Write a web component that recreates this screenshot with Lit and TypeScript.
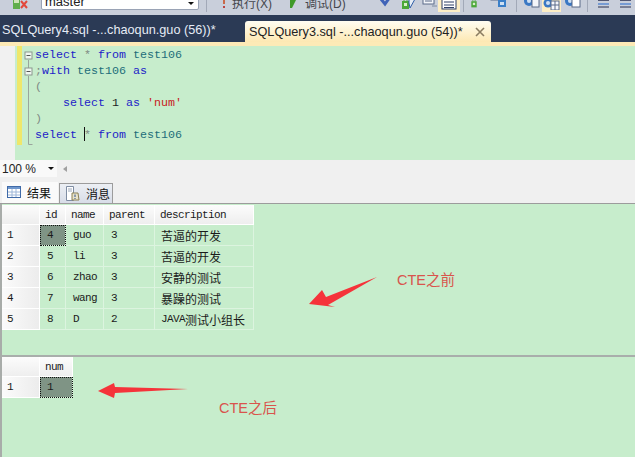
import { LitElement, html, css, svg } from "lit";
import { customElement } from "lit/decorators.js";

const K = (s: string) => html`<span class="kw">${s}</span>`;
const T = (s: string) => html`<span class="tb">${s}</span>`;
const G = (s: string) => html`<span class="gr">${s}</span>`;

const dbIcon = svg`<rect x="1" y="2" width="7" height="12" fill="#5fae4a"/><rect x="2" y="3" width="5" height="5" fill="#cfe6b8"/><path d="M9 6l6 7M15 6l-6 7" stroke="#e2483c" stroke-width="2"/>`;
const greenBox = svg`<rect x="3" y="6" width="7" height="8" fill="#4aa838"/><rect x="5" y="8" width="3" height="3" fill="#d8efc8"/><path d="M5 6V3h3v3" fill="none" stroke="#4aa838"/>`;

@customElement("app-root")
export class AppRoot extends LitElement {
  static styles = css`
    :host { display: block; width: 635px; height: 457px; overflow: hidden; position: relative; background: #c7edcc; font-family: "Liberation Sans", "Noto Sans CJK SC", sans-serif; }
    .page { display: flex; flex-direction: column; height: 457px; }

    .toolbar { height: 15px; flex: none; overflow: hidden; display: flex; align-items: flex-end; background: #c9cfdb; padding-bottom: 3px; box-sizing: border-box; color: #44464c; font-size: 12px; }
    .toolbar svg { flex: none; display: block; }
    .toolbar > svg { margin-bottom: 3px; }
    .spacer { flex: none; }
    .combo { width: 158px; height: 22px; margin-left: 11px; margin-bottom: 2px; box-sizing: border-box; background: #fff; border: 1px solid #9aa3b5; border-radius: 2px; display: flex; align-items: flex-end; justify-content: space-between; padding: 0 4px 0 3px; color: #222; line-height: 15px; font-size: 13px; flex: none; }
    .caret { width: 0; height: 0; border-left: 3px solid transparent; border-right: 3px solid transparent; border-top: 3px solid #111; margin-bottom: 4px; }
    .sep { width: 1px; height: 13px; background: #a2a9b8; flex: none; }
    .hl { background: #fdeec4; height: 13px; padding: 0 3px 2px; box-sizing: border-box; display: flex; align-items: flex-end; flex: none; overflow: hidden; }
    .tb-text { flex: none; line-height: 16px; white-space: nowrap; font-size: 12px; }

    .tabstrip { height: 27px; flex: none; background: #2b3a55; display: flex; align-items: flex-end; font-size: 12.7px; white-space: nowrap; }
    .tab-off { width: 245px; padding: 0 0 3px 2px; box-sizing: border-box; color: #e6ecf6; line-height: 18px; }
    .tab-on { width: 246px; height: 21px; box-sizing: border-box; padding-left: 4px; border-radius: 3px 3px 0 0; background: linear-gradient(#fffdf2, #fde8b2); color: #222; display: flex; align-items: center; justify-content: space-between; padding-right: 6px; }
    .strip { height: 4px; flex: none; background: #fdeab6; }

    .editor { height: 114px; flex: none; display: flex; background: #c7edcc; }
    .gutter { width: 15px; flex: none; background: #f1f1f1; }
    .mark { width: 2px; flex: none; }
    .yellow { width: 5px; height: 99px; flex: none; background: #efe76a; }
    .outline { width: 13px; flex: none; }
    .outline svg { display: block; }
    .code { font-family: "Liberation Mono", monospace; font-size: 11.67px; line-height: 16px; padding-top: 1px; white-space: pre; color: #222; }
    .kw { color: #1c22c8; }
    .tb { color: #1e6d7a; }
    .gr { color: #7f8a84; }
    .st { color: #c8201c; }
    .cursor { display: inline-block; width: 1px; height: 14px; background: #111; vertical-align: -3px; margin-right: -1px; }

    .status { height: 17px; flex: none; background: #f0f0f0; display: flex; align-items: center; font-size: 12px; color: #222; }
    .zoom { width: 57px; height: 17px; box-sizing: border-box; background: #f9f9f9; padding-left: 2px; display: flex; align-items: center; justify-content: space-between; padding-right: 3px; }
    .zoom .caret { margin: 0; }
    .left-tri { margin-left: 6px; width: 0; height: 0; border-top: 3px solid transparent; border-bottom: 3px solid transparent; border-right: 4px solid #a0a0a0; }

    .rtabs { height: 26px; flex: none; background: #f0f0f0; display: flex; align-items: flex-end; padding-left: 2px; gap: 1px; border-bottom: 1px solid #9c9c9c; box-sizing: content-box; font-size: 12px; color: #111; }
    .rtab { display: flex; align-items: center; gap: 6px; box-sizing: border-box; padding-bottom: 1px; }
    .rtab.on { width: 56px; height: 21px; padding-left: 5px; background: #fafafa; }
    .rtab.off { width: 54px; height: 20px; padding-left: 5px; background: linear-gradient(#eceff4, #d8dde8); border: 1px solid #9c9c9c; border-bottom: 0; }

    .pane { background: #c7edcc; border-left: 2px solid #a8aca9; box-sizing: border-box; flex: none; }
    .p1 { height: 153px; padding-top: 1px; border-bottom: 2px solid #a9aeab; }
    .p2 { flex: 1; }
    .grid { display: grid; width: max-content; font-family: "Liberation Mono", "Noto Sans CJK SC", monospace; font-size: 11px; letter-spacing: -0.6px; color: #1b1b1b; }
    .cell { box-sizing: border-box; padding-left: 7px; display: flex; align-items: center; white-space: pre; border-right: 1px solid #dcf4df; border-bottom: 1px solid #dcf4df; }
    .hd { height: 20px; padding-left: 5px; background: linear-gradient(#fcfcfc, #eeeeee); border-color: #fff; }
    .rh { background: linear-gradient(90deg, #fbfbfb, #ececec); border-color: #fff; padding-left: 5px; }
    .d { height: 21px; }
    .cjk { padding-left: 6px; }
    .cjk span { font-family: "Noto Sans CJK SC", sans-serif; font-size: 12px; letter-spacing: 0; }
    .sel { background: #7f9485; outline: 1px dotted #111; outline-offset: -1px; }

    .overlay { position: absolute; inset: 0; pointer-events: none; }
    .overlay svg { position: absolute; left: 0; top: 0; }
    .label { position: absolute; color: #d9544c; font-size: 14.5px; line-height: 18px; white-space: nowrap; }
    .l1 { left: 397px; top: 271px; }
    .l2 { left: 219px; top: 399px; }
  `;

  private rows = [
    ["4", "guo", "3", "苦逼的开发"],
    ["5", "li", "3", "苦逼的开发"],
    ["6", "zhao", "3", "安静的测试"],
    ["7", "wang", "3", "暴躁的测试"],
    ["8", "D", "2", "JAVA|测试小组长"],
  ];

  private gap(w: number) {
    return html`<div class="spacer" style="width:${w}px"></div>`;
  }

  private toolbar() {
    return html`<div class="toolbar">
      ${this.gap(12)}
      <svg width="18" height="14" viewBox="0 0 18 14">${dbIcon}</svg>
      <div class="combo"><span>master</span><span class="caret"></span></div>
      ${this.gap(7)}<div class="sep"></div>
      ${this.gap(13)}
      <svg width="8" height="13" viewBox="0 0 8 13"><path d="M4 1v7" stroke="#c86a4a" stroke-width="2"/><path d="M4 10v2" stroke="#b44" stroke-width="2"/></svg>
      ${this.gap(4)}
      <span class="tb-text">执行(X)</span>
      ${this.gap(18)}
      <svg width="8" height="13" viewBox="0 0 8 13"><path d="M0 2l8 -3v1l-6 12h-2z" fill="#3f9a2a"/></svg>
      ${this.gap(7)}
      <span class="tb-text">调试(D)</span>
      ${this.gap(14)}
      <svg width="8" height="13" viewBox="0 0 8 13"><rect y="0" width="8" height="3" fill="#9ea3ad"/></svg>
      ${this.gap(12)}
      <svg width="11" height="13" viewBox="0 0 11 13"><path d="M1 3l4 5 5-7" fill="none" stroke="#3f63b8" stroke-width="3"/></svg>
      ${this.gap(8)}
      <svg width="17" height="14" viewBox="0 0 17 14">${greenBox}<path d="M11 13l5-9V0h-6v8z" fill="#e6edf5" stroke="#2f5ea8"/></svg>
      ${this.gap(4)}
      <svg width="17" height="14" viewBox="0 0 17 14"><rect x="3" y="0" width="11" height="9" fill="#f3f5f9" stroke="#5a6a88"/><path d="M5 3h7M5 6h7" stroke="#5a6a88"/><path d="M12 11h5" stroke="#7d8aa0"/></svg>
      ${this.gap(1)}
      <div class="hl">
        <svg width="16" height="11" viewBox="0 0 16 11"><rect x="1" y="0" width="14" height="10" fill="#fff" stroke="#2d3f66"/><path d="M3 3h10M3 6h10M3 8.5h10" stroke="#2d3f66"/></svg>
      </div>
      ${this.gap(3)}<div class="sep"></div>
      ${this.gap(5)}
      <svg width="10" height="14" viewBox="0 0 13 14">${greenBox}</svg>
      ${this.gap(11)}
      <svg width="17" height="14" viewBox="0 0 17 14"><rect x="1" y="0" width="10" height="5" fill="#e9edf4" stroke="#5a6a88"/><rect x="8" y="5" width="8" height="7" fill="#3a7fc8"/><rect x="10" y="7" width="4" height="3" fill="#cfe0f2"/></svg>
      ${this.gap(9)}<div class="sep"></div>
      ${this.gap(6)}
      <svg width="17" height="14" viewBox="0 0 17 14"><circle cx="6" cy="6" r="5" fill="#3a78c4"/><circle cx="6" cy="6" r="2" fill="#cfe0f2"/><rect x="9" y="3" width="7" height="9" fill="#f3f5f9" stroke="#5a6a88"/></svg>
      ${this.gap(2)}
      <div class="hl" style="padding-left:1px;padding-right:1px">
        <svg width="17" height="11" viewBox="0 1 17 11"><circle cx="5" cy="5" r="4.5" fill="#3a78c4"/><circle cx="5" cy="5" r="2" fill="#cfe0f2"/><rect x="8" y="3" width="8" height="9" fill="#f6f7fb" stroke="#5a6a88"/><path d="M8 7h8M12 3v9" stroke="#5a6a88"/></svg>
      </div>
      ${this.gap(3)}
      <svg width="17" height="14" viewBox="0 0 17 14"><circle cx="6" cy="6" r="5" fill="#3a78c4"/><circle cx="6" cy="6" r="2" fill="#cfe0f2"/><rect x="8" y="3" width="8" height="9" fill="#fff" stroke="#5a6a88"/></svg>
      ${this.gap(6)}<div class="sep"></div>
      ${this.gap(9)}
      <svg width="13" height="14" viewBox="0 0 13 14"><path d="M1 5h11" stroke="#2b3050" stroke-width="1.5"/><path d="M1 9h11" stroke="#5a8ad0" stroke-width="1.5"/><path d="M1 12h11" stroke="#2b3050"/></svg>
      ${this.gap(9)}
      <svg width="13" height="14" viewBox="0 0 13 14"><path d="M1 5h11" stroke="#2b3050" stroke-width="1.5"/><path d="M1 9h11" stroke="#5a8ad0" stroke-width="1.5"/><path d="M1 12h11" stroke="#2b3050"/></svg>
    </div>`;
  }

  private editor() {
    return html`<div class="editor">
      <div class="gutter"></div><div class="mark"></div>
      <div class="yellow"></div>
      <div class="outline">
        <svg width="13" height="114" viewBox="0 0 13 114">
          <path d="M6.5 14v8M6.5 30v68.5h4" fill="none" stroke="#9aa59c"/>
          <rect x="3" y="6" width="7" height="7" fill="#eef7ef" stroke="#8c978e"/>
          <path d="M4.5 9.5h4" stroke="#555"/>
          <rect x="3" y="22" width="7" height="7" fill="#eef7ef" stroke="#8c978e"/>
          <path d="M4.5 25.5h4" stroke="#555"/>
        </svg>
      </div>
      <div class="code">${K("select")} ${G("*")} ${K("from")} ${T("test106")}
${G(";")}${K("with")} ${T("test106")} ${K("as")}
${G("(")}
    ${K("select")} 1 ${K("as")} <span class="st">'num'</span>
${G(")")}
${K("select")} <span class="cursor"></span>${G("*")} ${K("from")} ${T("test106")}</div>
    </div>`;
  }

  private grid1() {
    return html`<div class="grid" style="grid-template-columns:38px 26px 38px 51px 99px">
      <div class="cell hd"></div>
      ${["id", "name", "parent", "description"].map((h) => html`<div class="cell hd">${h}</div>`)}
      ${this.rows.map((r, i) => html`
        <div class="cell d rh">${i + 1}</div>
        <div class="cell d ${i === 0 ? "sel" : ""}">${r[0]}</div>
        <div class="cell d">${r[1]}</div>
        <div class="cell d">${r[2]}</div>
        <div class="cell d cjk">${r[3].includes("|") ? html`${r[3].split("|")[0]}<span>${r[3].split("|")[1]}</span>` : html`<span>${r[3]}</span>`}</div>
      `)}
    </div>`;
  }

  private grid2() {
    return html`<div class="grid" style="grid-template-columns:38px 33px">
      <div class="cell hd"></div><div class="cell hd">num</div>
      <div class="cell d rh">1</div><div class="cell d sel">1</div>
    </div>`;
  }

  render() {
    return html`<div class="page">
      ${this.toolbar()}
      <div class="tabstrip">
        <div class="tab-off">SQLQuery4.sql -...chaoqun.guo (56))*</div>
        <div class="tab-on"><span>SQLQuery3.sql -...chaoqun.guo (54))*</span>
          <svg width="10" height="10" viewBox="0 0 10 10"><path d="M1 1l8 8M9 1l-8 8" stroke="#8b7d62" stroke-width="1.6"/></svg>
        </div>
      </div>
      <div class="strip"></div>
      ${this.editor()}
      <div class="status">
        <div class="zoom"><span>100 %</span><span class="caret"></span></div>
        <span class="left-tri"></span>
      </div>
      <div class="rtabs">
        <div class="rtab on">
          <svg width="14" height="12" viewBox="0 0 14 12"><rect x=".5" y=".5" width="13" height="11" fill="#fff" stroke="#3f6aa8"/><rect x="1" y="1" width="12" height="2" fill="#6f97cc"/><path d="M1 6h12M1 9h12M5 3v8M9 3v8" stroke="#9db6d8"/></svg>
          <span>结果</span>
        </div>
        <div class="rtab off">
          <svg width="15" height="15" viewBox="0 0 15 15"><path d="M1.5.5h7v14h-7z" fill="#fff" stroke="#7f8da3"/><path d="M3 3h4M3 5h4" stroke="#9aa7ba"/><path d="M7 7h6l1 7h-7z" fill="#e9e3c9" stroke="#8a8057"/><path d="M10 8.5v2.5M10 12v1" stroke="#2b4f8f"/></svg>
          <span>消息</span>
        </div>
      </div>
      <div class="pane p1">${this.grid1()}</div>
      <div class="pane p2">${this.grid2()}</div>
    </div>
    <div class="overlay">
      <svg width="635" height="457" viewBox="0 0 635 457">
        <path d="M309 304L322 290L326 297L377 277L328 305L335 307Z" fill="#f5333a"/>
        <path d="M98 391L114 383L115 387L188 389L115 393L114 398Z" fill="#f5333a"/>
      </svg>
      <div class="label l1">CTE之前</div>
      <div class="label l2">CTE之后</div>
    </div>`;
  }
}
